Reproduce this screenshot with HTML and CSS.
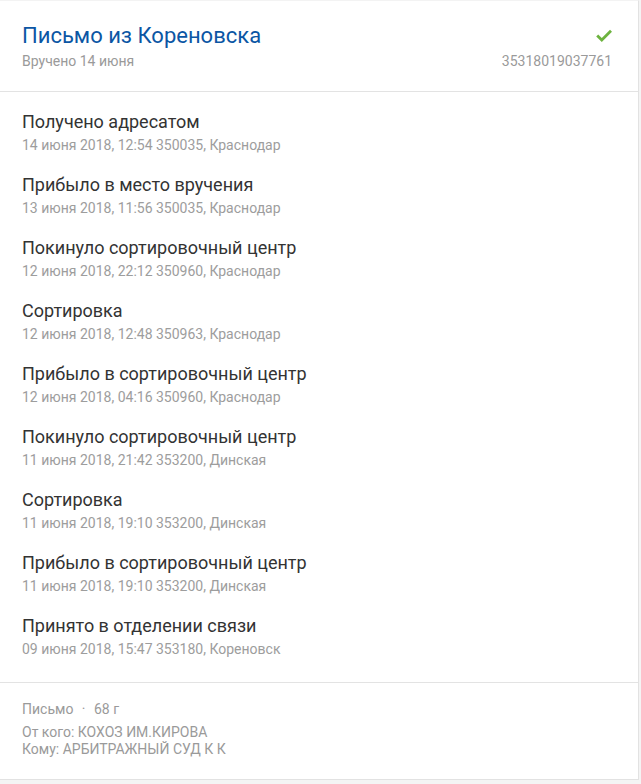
FILE: index.html
```html
<!DOCTYPE html>
<html lang="ru">
<head>
<meta charset="utf-8">
<link rel="stylesheet" href="styles.css">
</head>
<body>
<div class="card">
  <div class="head">
    <div class="head-row">
      <div class="title">Письмо из Кореновска</div>
      <svg class="check" width="16" height="13" viewBox="0 0 16 13"><path d="M1.2 6.4 L5.8 11 L15 1.8" fill="none" stroke="#6db33f" stroke-width="2.8"/></svg>
    </div>
    <div class="head-row sub">
      <span>Вручено 14 июня</span>
      <span>35318019037761</span>
    </div>
  </div>
  <div class="list">
    <div class="item"><div class="it">Получено адресатом</div><div class="is">14 июня 2018, 12:54 350035, Краснодар</div></div>
    <div class="item"><div class="it">Прибыло в место вручения</div><div class="is">13 июня 2018, 11:56 350035, Краснодар</div></div>
    <div class="item"><div class="it">Покинуло сортировочный центр</div><div class="is">12 июня 2018, 22:12 350960, Краснодар</div></div>
    <div class="item"><div class="it">Сортировка</div><div class="is">12 июня 2018, 12:48 350963, Краснодар</div></div>
    <div class="item"><div class="it">Прибыло в сортировочный центр</div><div class="is">12 июня 2018, 04:16 350960, Краснодар</div></div>
    <div class="item"><div class="it">Покинуло сортировочный центр</div><div class="is">11 июня 2018, 21:42 353200, Динская</div></div>
    <div class="item"><div class="it">Сортировка</div><div class="is">11 июня 2018, 19:10 353200, Динская</div></div>
    <div class="item"><div class="it">Прибыло в сортировочный центр</div><div class="is">11 июня 2018, 19:10 353200, Динская</div></div>
    <div class="item"><div class="it">Принято в отделении связи</div><div class="is">09 июня 2018, 15:47 353180, Кореновск</div></div>
  </div>
  <div class="foot">
    <div class="kind">Письмо <span class="dot">·</span> 68 г</div>
    <div class="party">От кого: КОХОЗ ИМ.КИРОВА</div>
    <div class="party">Кому: АРБИТРАЖНЫЙ СУД К К</div>
  </div>
</div>
</body>
</html>
```
FILE: styles.css
```css
html, body { margin: 0; padding: 0; }
body {
  background: #f4f4f4;
  font-family: Roboto, "Noto Sans", Arial, sans-serif;
  width: 641px;
  height: 784px;
  overflow: hidden;
}
.card {
  width: 638px;
  background: #fff;
  border-right: 1px solid #e2e2e2;
  border-bottom: 1px solid #e2e2e2;
  border-top: 1px solid #f3f3f3;
  box-sizing: content-box;
}
.head {
  padding: 21px 26px 21px 22px;
  border-bottom: 1px solid #e3e3e3;
}
.head-row {
  display: flex;
  justify-content: space-between;
  align-items: center;
}
.title {
  font-size: 22px;
  line-height: 28px;
  color: #0b56a4;
}
.check { margin-top: -2px; }
.sub {
  margin-top: 2px;
  font-size: 14px;
  line-height: 18px;
  color: #9a9a9a;
}
.list {
  padding: 18px 22px 22px;
  display: flex;
  flex-direction: column;
  gap: 17px;
  border-bottom: 1px solid #e3e3e3;
}
.it {
  font-size: 18px;
  line-height: 24px;
  color: #333;
}
.is {
  font-size: 14px;
  line-height: 22px;
  color: #9d9d9d;
}
.foot {
  padding: 17px 22px 21px;
  font-size: 14px;
  color: #9a9a9a;
}
.kind { line-height: 18px; margin-bottom: 6px; }
.dot { margin: 0 5px; }
.party { line-height: 17px; }
```
